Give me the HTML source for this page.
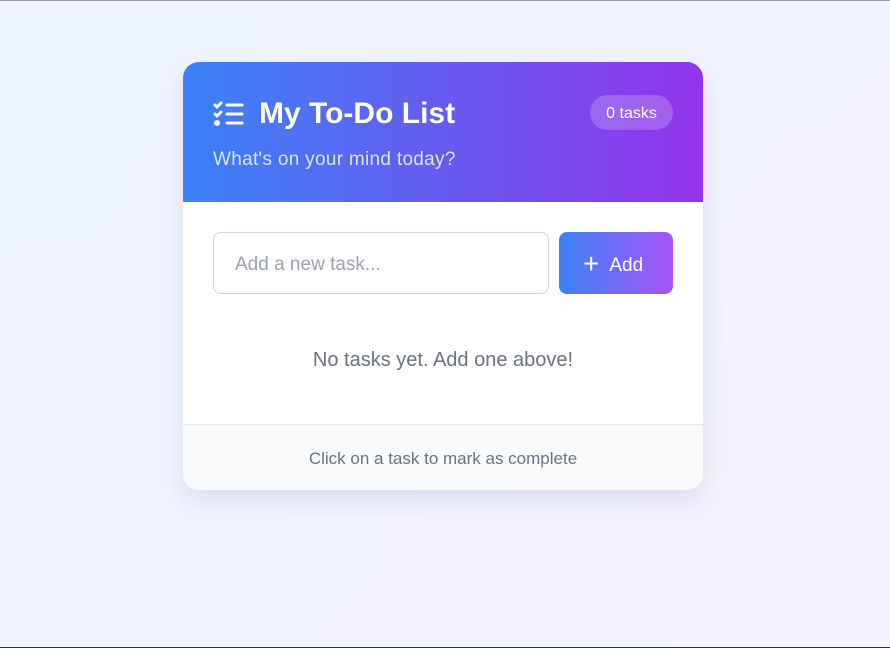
<!DOCTYPE html>
<html><head><style>
*{box-sizing:border-box;margin:0;padding:0}
html,body{width:890px;height:648px;overflow:hidden}
body{font-family:"Liberation Sans",sans-serif;background:linear-gradient(135deg,#eff6ff,#f5f3ff);border-top:1px solid #a0a0a8;border-bottom:1px solid #333;position:relative}
.card{position:absolute;left:183px;top:61px;width:520px;height:428px;background:#fff;border-radius:16px;overflow:hidden;box-shadow:0 10px 25px rgba(90,90,140,.15)}
.hd{height:140px;background:linear-gradient(90deg,#3b82f6,#9333ea);position:relative;color:#fff}
.title{position:absolute;left:30px;top:35px;display:flex;align-items:center;font-size:30px;font-weight:bold}
.title svg{margin-right:15px}
.sub{position:absolute;left:30px;top:87px;font-size:19px;color:#dbe4fe;letter-spacing:.3px}
.badge{position:absolute;right:30px;top:33px;width:83px;height:35px;border-radius:18px;background:rgba(255,255,255,.2);font-size:16px;text-align:center;line-height:37px}
.inp{position:absolute;left:30px;top:170px;width:336px;height:62px;border:1px solid #d1d5db;border-radius:8px;font-size:19px;color:#9ca3af;padding-left:21px;line-height:63px}
.btn{position:absolute;left:376px;top:170px;width:114px;height:62px;border-radius:8px;background:linear-gradient(90deg,#3b82f6,#a855f7);color:#fff;font-size:19px;line-height:64px;padding-left:24px}
.btn b{font-size:28px;font-weight:normal;vertical-align:-2px;margin-right:10px}
.empty{position:absolute;top:287px;width:100%;text-align:center;font-size:20px;color:#6b7280}
.ft{position:absolute;top:362px;left:0;width:100%;height:66px;background:#f9fafb;border-top:1px solid #e5e7eb;text-align:center;line-height:68px;font-size:17px;color:#6b7280}
</style></head><body>
<div class="card">
<div class="hd">
<div class="title"><svg width="31" height="26" viewBox="0 0 31 26" fill="none" stroke="#fff" stroke-width="3" stroke-linecap="round"><path d="M2 4l2 2 4-4M2 13l2 2 4-4"/><circle cx="4" cy="22" r="1.5" fill="#fff"/><path d="M14 4h15M14 13h15M14 22h15"/></svg>My To-Do List</div>
<div class="sub">What's on your mind today?</div>
<div class="badge">0 tasks</div>
</div>
<div class="inp">Add a new task...</div>
<div class="btn"><b>+</b>Add</div>
<div class="empty">No tasks yet. Add one above!</div>
<div class="ft">Click on a task to mark as complete</div>
</div>
</body></html>
